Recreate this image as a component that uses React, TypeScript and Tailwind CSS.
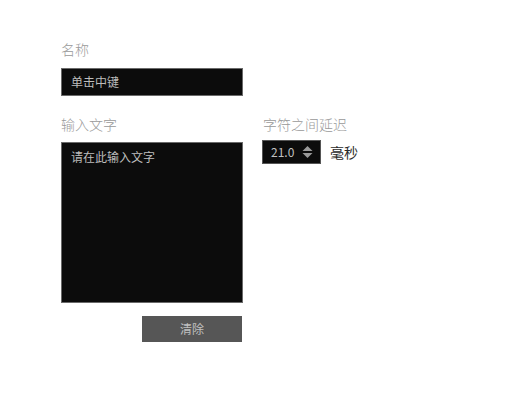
const font = { fontFamily: '"Noto Sans CJK SC", "Noto Sans", sans-serif' };

function Spinner() {
  return (
    <svg width="11" height="14" viewBox="0 0 11 14" className="shrink-0">
      <path d="M5.5 1 L10.5 6 L0.5 6 Z" fill="#9a9a9a" />
      <path d="M0.5 8 L10.5 8 L5.5 13 Z" fill="#9a9a9a" />
    </svg>
  );
}

export default function App() {
  return (
    <div className="w-[506px] h-[419px] bg-white pl-[61px] pt-[39px]" style={font}>
      <div className="text-[14px] leading-[20px] font-light text-[#999]">名称</div>
      <div className="mt-[9px] w-[182px] h-[28px] bg-[#0c0c0c] border border-[#6a6a6a] flex items-center pl-[9px] text-[12px] text-[#bdbdbd]">
        单击中键
      </div>

      <div className="mt-[18px] flex gap-[19px]">
        <div className="w-[182px] flex flex-col">
          <div className="text-[14px] leading-[20px] font-light text-[#999]">输入文字</div>
          <div className="mt-[8px] h-[161px] bg-[#0c0c0c] border border-[#6a6a6a] pl-[9px] pt-[6px] text-[12px] leading-[16px] text-[#bdbdbd]">
            请在此输入文字
          </div>
          <button className="mt-[13px] self-end mr-px w-[100px] h-[26px] bg-[#565656] text-[12px] text-[#c0c0c0]">
            清除
          </button>
        </div>

        <div className="flex flex-col">
          <div className="pl-px text-[14px] leading-[20px] font-light text-[#999]">字符之间延迟</div>
          <div className="mt-[6px] flex items-center">
            <div className="w-[59px] h-[24px] bg-[#0c0c0c] border border-[#555] flex items-center pl-[8px] gap-[8px]">
              <span className="text-[12px] text-[#c0c0c0]">21.0</span>
              <Spinner />
            </div>
            <span className="ml-[9px] text-[14px] text-[#2a2a2a]">毫秒</span>
          </div>
        </div>
      </div>
    </div>
  );
}
